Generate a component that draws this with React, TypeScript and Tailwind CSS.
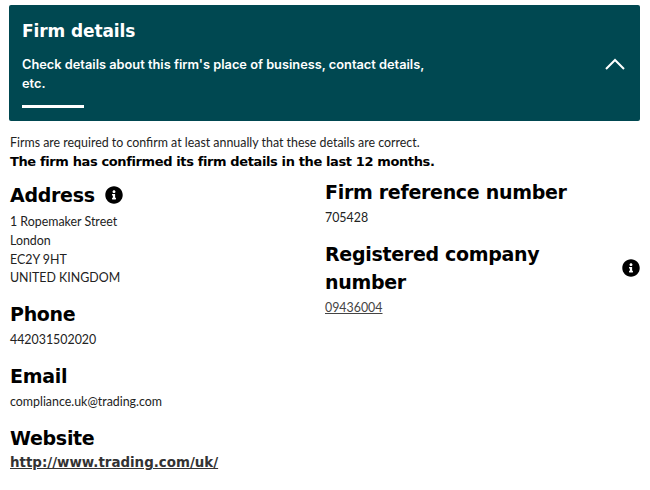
import React from 'react';
import { FaInfoCircle } from 'react-icons/fa';

const verdana = "font-['DejaVu_Sans',sans-serif]";
const lato = "font-['Lato',sans-serif]";

const Heading = ({ children }: { children: React.ReactNode }) => (
  <h3 className={`${verdana} text-[19px] tracking-[-0.3px] leading-[28px] font-bold text-black`}>{children}</h3>
);

const App: React.FC = () => {
  return (
    <div className={`w-[650px] h-[490px] overflow-hidden bg-white pt-[5px] pl-[9px] pr-[10px] ${lato}`}>
      {/* Banner */}
      <div className="h-[116px] rounded-[2px] bg-[#004851] pl-[13px] pr-[15px] pt-[14px] flex justify-between text-white">
        <div>
          <h2 className={`${verdana} text-[17px] tracking-[-0.1px] leading-[24px] font-bold`}>Firm details</h2>
          <p className="mt-[12px] w-[420px] font-['Inter',sans-serif] text-[12.8px] leading-[19px] font-semibold">
            Check details about this firm's place of business, contact details, etc.
          </p>
          <div className="mt-[12px] h-[3px] w-[62px] bg-white" />
        </div>
        <svg className="mt-[39px]" width="20" height="12" viewBox="0 0 20 12" fill="none" stroke="white" strokeWidth="2">
          <path d="M1 11 L10 2 L19 11" />
        </svg>
      </div>

      <div className="pl-[1px]">
        {/* Confirmation note */}
        <p className="mt-[15px] text-[12.4px] leading-[14px] text-[#222]">
          Firms are required to confirm at least annually that these details are correct.
        </p>
        <p className={`${verdana} mt-[3px] text-[13px] tracking-[-0.38px] leading-[17px] font-bold text-black`}>
          The firm has confirmed its firm details in the last 12 months.
        </p>

        <div className="mt-[3px] grid grid-cols-[315px_1fr]">
          {/* Left column */}
          <div>
            <div className="flex items-center gap-[10px] mt-[8px]">
              <Heading>Address</Heading>
              <FaInfoCircle className="text-black" size={18} />
            </div>
            <div className="mt-[4px] text-[12.4px] leading-[18.8px] text-[#222]">
              <div>1 Ropemaker Street</div>
              <div>London</div>
              <div>EC2Y 9HT</div>
              <div>UNITED KINGDOM</div>
            </div>
            <div className="mt-[12px]"><Heading>Phone</Heading></div>
            <div className="mt-[2px] text-[12.4px] leading-[19px] text-[#222]">442031502020</div>
            <div className="mt-[13px]"><Heading>Email</Heading></div>
            <div className="mt-[2px] text-[12.4px] leading-[19px] text-[#222]">compliance.uk@trading.com</div>
            <div className="mt-[13px]"><Heading>Website</Heading></div>
            <a className={`${verdana} mt-[1px] block text-[13.4px] leading-[19px] font-bold text-[#333] underline`}>http://www.trading.com/uk/</a>
          </div>

          {/* Right column */}
          <div className="pt-[5px]">
            <Heading>Firm reference number</Heading>
            <div className="mt-[2px] text-[12.4px] leading-[19px] text-[#222]">705428</div>
            <div className="mt-[13px] flex items-center justify-between">
              <Heading>
                <span className="block w-[260px]">Registered company number</span>
              </Heading>
              <FaInfoCircle className="text-black" size={18} />
            </div>
            <a className="mt-[2px] block text-[12.4px] leading-[19px] text-[#444] underline">09436004</a>
          </div>
        </div>
      </div>
    </div>
  );
};

export default App;
